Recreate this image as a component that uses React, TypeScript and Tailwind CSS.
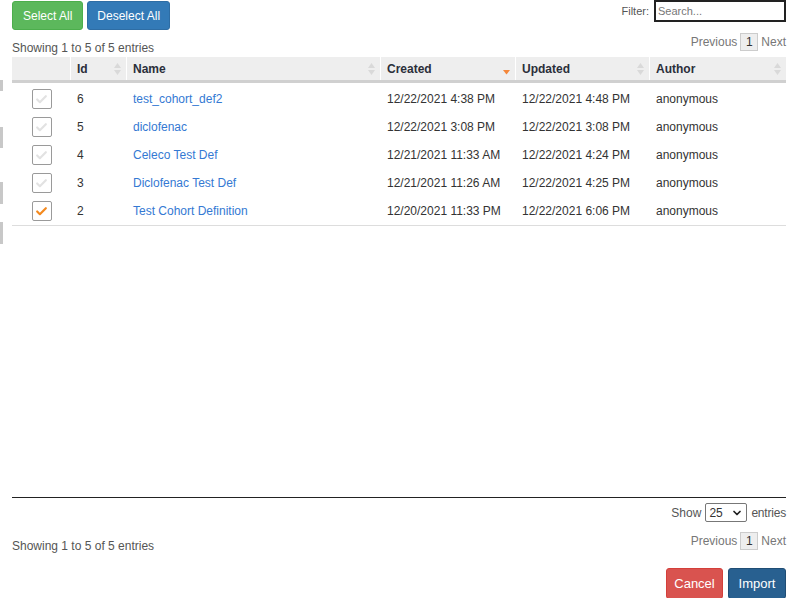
import { Check, ChevronDown } from "lucide-react";

interface Cohort {
    id: number;
    name: string;
    created: string;
    updated: string;
    author: string;
    selected: boolean;
}

const rows: Cohort[] = [
    { id: 6, name: "test_cohort_def2", created: "12/22/2021 4:38 PM", updated: "12/22/2021 4:48 PM", author: "anonymous", selected: false },
    { id: 5, name: "diclofenac", created: "12/22/2021 3:08 PM", updated: "12/22/2021 3:08 PM", author: "anonymous", selected: false },
    { id: 4, name: "Celeco Test Def", created: "12/21/2021 11:33 AM", updated: "12/22/2021 4:24 PM", author: "anonymous", selected: false },
    { id: 3, name: "Diclofenac Test Def", created: "12/21/2021 11:26 AM", updated: "12/22/2021 4:25 PM", author: "anonymous", selected: false },
    { id: 2, name: "Test Cohort Definition", created: "12/20/2021 11:33 PM", updated: "12/22/2021 6:06 PM", author: "anonymous", selected: true },
];

const SortIcon = ({ active }: { active?: boolean }) =>
    active ? (
        <svg width="9" height="14" viewBox="0 0 9 14" className="shrink-0">
            <path d="M1 8 L8 8 L4.5 12.5 Z" fill="#f4873a" />
        </svg>
    ) : (
        <svg width="9" height="14" viewBox="0 0 9 14" className="shrink-0">
            <path d="M1 6 L8 6 L4.5 1 Z" fill="#d9d9d9" />
            <path d="M1 8 L8 8 L4.5 13 Z" fill="#d9d9d9" />
        </svg>
    );

const Pager = () => (
    <div className="flex items-center gap-[3px] text-[#777]">
        <span>Previous</span>
        <span className="flex h-[18px] w-[18px] items-center justify-center border border-[#ccc] bg-[#eee] text-[#333]">1</span>
        <span>Next</span>
    </div>
);

const headers = [
    { label: "Id" },
    { label: "Name" },
    { label: "Created", active: true },
    { label: "Updated" },
    { label: "Author" },
];

const cols = "grid grid-cols-[59px_56px_254px_135px_134px_136px]";

export default function App() {
    return (
        <div className="relative h-[598px] w-[787px] overflow-hidden bg-white font-['Liberation_Sans',Arial,sans-serif] text-[12px] text-[#333]">
            {/* stray edge marks */}
            <div className="absolute left-0 top-[80px] h-[11px] w-[3px] bg-[#c8c8c8]" />
            <div className="absolute left-0 top-[127px] h-[21px] w-[3px] bg-[#c8c8c8]" />
            <div className="absolute left-0 top-[182px] h-[22px] w-[3px] bg-[#c8c8c8]" />
            <div className="absolute left-0 top-[222px] h-[22px] w-[3px] bg-[#c8c8c8]" />

            <div className="flex h-full flex-col pl-3 pr-[1px]">
                {/* toolbar */}
                <div className="flex h-[30px] items-start justify-between">
                    <div className="mt-[1px] flex gap-1">
                        <button className="h-[29px] rounded-[3px] border border-[#4cae4c] bg-[#5cb85c] px-[10px] text-[12px] text-white">
                            Select All
                        </button>
                        <button className="h-[29px] rounded-[3px] border border-[#2e6da4] bg-[#337ab7] px-[9px] text-[12px] text-white">
                            Deselect All
                        </button>
                    </div>
                    <div className="flex items-center gap-[5px]">
                        <span className="text-[11px] text-[#555]">Filter:</span>
                        <input
                            placeholder="Search..."
                            className="h-[22px] w-[132px] border-2 border-[#222] px-[2px] text-[11px] text-[#333] outline-none placeholder:text-[#777]"
                        />
                    </div>
                </div>

                <div className="flex h-[27px] items-start justify-between">
                    <span className="mt-[9px] text-[#555]">Showing 1 to 5 of 5 entries</span>
                    <div className="mt-[3px]">
                        <Pager />
                    </div>
                </div>

                {/* table */}
                <div className={`${cols} h-[26px] border-b-[3px] border-[#d0d0d0] bg-[#eee]`}>
                    <div className="border-r border-white" />
                    {headers.map((h, i) => (
                        <div
                            key={h.label}
                            className={`flex items-center justify-between pl-[6px] pr-[4px] font-bold text-[#2b2f3a] ${i < headers.length - 1 ? "border-r border-white" : ""}`}
                        >
                            <span>{h.label}</span>
                            <SortIcon active={h.active} />
                        </div>
                    ))}
                </div>

                <div className="mt-[2px] border-b border-[#ddd]">
                    {rows.map((r) => (
                        <div key={r.id} className={`${cols} h-[28px] items-center`}>
                            <div className="flex justify-center">
                                <span className="flex h-[20px] w-[20px] items-center justify-center rounded-[2px] border border-[#9a9a9a] bg-white">
                                    <Check
                                        size={13}
                                        strokeWidth={4}
                                        className={r.selected ? "text-[#f4891e]" : "text-[#e2e2e2]"}
                                    />
                                </span>
                            </div>
                            <div className="pl-[6px]">{r.id}</div>
                            <div className="pl-[6px] text-[#3479d3]">{r.name}</div>
                            <div className="pl-[6px]">{r.created}</div>
                            <div className="pl-[6px]">{r.updated}</div>
                            <div className="pl-[6px]">{r.author}</div>
                        </div>
                    ))}
                </div>

                {/* footer */}
                <div className="mt-auto mb-[-1px] border-t border-[#222]">
                    <div className="mt-[5px] flex h-[19px] items-center justify-end gap-[4px] text-[#555]">
                        <span>Show</span>
                        <span className="flex h-[19px] w-[42px] items-center justify-between rounded-[2px] border border-[#777] px-[3px] text-[#333]">
                            25
                            <ChevronDown size={12} strokeWidth={3.5} className="text-[#222]" />
                        </span>
                        <span className="tracking-[-0.2px]">entries</span>
                    </div>
                    <div className="mt-[10px] flex h-[18px] items-end justify-between">
                        <span className="mb-[-5px] text-[#555]">Showing 1 to 5 of 5 entries</span>
                        <Pager />
                    </div>
                    <div className="mt-[18px] flex justify-end gap-[5px]">
                        <button className="h-[31px] w-[57px] rounded-[3px] border border-[#d43f3a] bg-[#d9534f] text-[13px] text-white">
                            Cancel
                        </button>
                        <button className="h-[31px] w-[58px] rounded-[3px] border border-[#204d74] bg-[#286090] text-[13px] text-white">
                            Import
                        </button>
                    </div>
                </div>
            </div>
        </div>
    );
}
